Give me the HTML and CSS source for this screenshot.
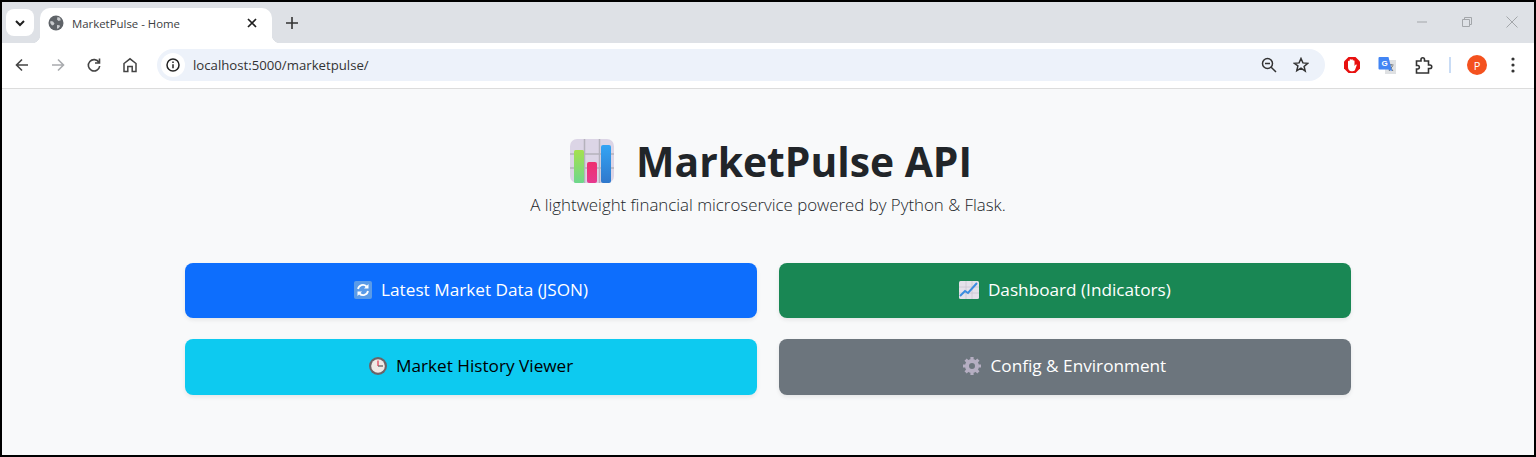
FILE: index.html
```html
<!DOCTYPE html>
<html lang="en">
<head>
    <meta charset="UTF-8">
    <meta name="viewport" content="width=device-width, initial-scale=1.0">
    <title>MarketPulse - Home</title>
    <link rel="stylesheet" href="styles.css">
</head>
<body>
<div class="window">

    <!-- Tab strip -->
    <div class="tabstrip">
        <div class="tab-search">
            <svg width="12" height="12" viewBox="0 0 12 12"><path d="M2 4l4 4 4-4" fill="none" stroke="#1f1f1f" stroke-width="2"/></svg>
        </div>
        <div class="tab">
            <svg class="tab-globe" width="16" height="16" viewBox="0 0 16 16">
                <circle cx="8" cy="8" r="7.5" fill="#5f6368"/>
                <path d="M9.500 2l2.500.8.800 2.400-2.300.8-1.500-1.500zM2.500 6l2.500.5 1.500 2-1 1.500-1.500.5-1.800-2.500zM9 10l2.500.3.500 1-1.500 2-1.500.5z" fill="#c9cbce"/>
            </svg>
            <span class="tab-title">MarketPulse - Home</span>
            <svg class="tab-close" width="10" height="10" viewBox="0 0 10 10"><path d="M1 1l8 8M9 1l-8 8" stroke="#1f1f1f" stroke-width="1.700"/></svg>
        </div>
        <svg class="new-tab" width="12" height="12" viewBox="0 0 12 12"><path d="M6 0v12M0 6h12" stroke="#333" stroke-width="1.600"/></svg>
        <div class="window-controls">
            <svg width="12" height="12" viewBox="0 0 12 12"><path d="M1 6h10" stroke="#a3a6aa" stroke-width="1"/></svg>
            <svg width="12" height="12" viewBox="0 0 12 12"><path d="M1.500 3.500h7v7h-7zM3.500 3.500v-2h7v7h-2" fill="none" stroke="#a3a6aa" stroke-width="1"/></svg>
            <svg width="12" height="12" viewBox="0 0 12 12"><path d="M.5.500l11 11M11.500.500l-11 11" stroke="#a3a6aa" stroke-width="1"/></svg>
        </div>
    </div>

    <!-- Toolbar -->
    <div class="toolbar">
        <div class="nav-icons">
            <svg width="16" height="16" viewBox="0 0 16 16"><path d="M14 8H2.500M8 2.500L2.500 8 8 13.500" fill="none" stroke="#444" stroke-width="1.600"/></svg>
            <svg width="16" height="16" viewBox="0 0 16 16"><path d="M2 8h11.500M8 2.500L13.500 8 8 13.500" fill="none" stroke="#a9abae" stroke-width="1.600"/></svg>
            <svg width="16" height="16" viewBox="0 0 16 16"><path d="M13 5.500A5.700 5.700 0 1 0 13.700 9M13.500 1.500v4.500H9" fill="none" stroke="#444" stroke-width="1.600"/></svg>
            <svg width="16" height="16" viewBox="0 0 16 16"><path d="M2 14.500V6.500L8 1.800l6 4.700v8h-3.800V9.500H5.800v5z" fill="none" stroke="#444" stroke-width="1.500"/></svg>
        </div>
        <div class="omnibox">
            <div class="site-info">
                <svg width="14" height="14" viewBox="0 0 14 14"><circle cx="7" cy="7" r="6" fill="none" stroke="#222" stroke-width="1.500"/><path d="M7 6.200v4M7 3.500v1.500" stroke="#222" stroke-width="1.500"/></svg>
            </div>
            <span class="url">localhost:5000/marketpulse/</span>
            <svg class="omni-zoom" width="16" height="16" viewBox="0 0 16 16"><circle cx="6.500" cy="6.500" r="5" fill="none" stroke="#333" stroke-width="1.500"/><path d="M4 6.500h5M10.200 10.200L15 15" stroke="#333" stroke-width="1.500"/></svg>
            <svg class="omni-star" width="16" height="16" viewBox="0 0 16 16"><path d="M8 1.500l1.900 4.400 4.800.4-3.600 3.100 1.100 4.700L8 11.100l-4.200 2.500 1.100-4.700L1.300 6.300l4.800-.4z" fill="none" stroke="#333" stroke-width="1.500"/></svg>
        </div>
        <div class="extensions">
            <svg class="ext-block" width="18" height="18" viewBox="0 0 18 18">
                <path d="M5.500 1h7L17 5.500v7L12.500 17h-7L1 12.500v-7z" fill="#e8100f"/>
                <path d="M5 10V5.500c0-1 1.600-1 1.600 0V4c0-1 1.600-1 1.600 0 0-1 1.700-1 1.700 0V5c0-1 1.600-1 1.600 0v5l1-1.200c.7-.7 1.600 0 1.100.8L12 14c-.6.8-1.200 1.200-2.200 1.200H8C6 15.200 5 13 5 11z" fill="#fff"/>
            </svg>
            <svg class="ext-translate" width="18" height="18" viewBox="0 0 18 18">
                <rect x="7" y="4" width="11" height="14" fill="#dfe1e3"/>
                <path d="M10.500 9h5M13 8v1M11 15l3.500-5M12 11l3 4" fill="none" stroke="#6b7076" stroke-width="1"/>
                <path d="M1.500 1h9L14 15l-4-1.500H1.500a1 1 0 0 1-1-1V2a1 1 0 0 1 1-1z" fill="#4285f4"/>
                <text x="3.500" y="10" class="ext-g">G</text>
            </svg>
            <svg class="ext-puzzle" width="18" height="18" viewBox="0 0 18 18"><path d="M1.500 5H6V3.500a1.700 1.700 0 0 1 3.500 0V5h4v4h1.500a1.700 1.700 0 0 1 0 3.500h-1.500v4.500H1.500v-4H3a1.800 1.800 0 0 0 0-3.500H1.500z" fill="none" stroke="#333" stroke-width="1.600"/></svg>
            <span class="ext-divider"></span>
            <span class="avatar">P</span>
            <svg class="menu-dots" width="4" height="16" viewBox="0 0 4 16"><circle cx="2" cy="2" r="1.600" fill="#333"/><circle cx="2" cy="8" r="1.600" fill="#333"/><circle cx="2" cy="14" r="1.600" fill="#333"/></svg>
        </div>
    </div>

    <!-- Page -->
    <div class="page">
        <h1 class="title">
            <svg class="title-icon" width="44" height="44" viewBox="0 0 44 44">
                <defs>
                    <linearGradient id="barGreen" x1="0" y1="0" x2="0" y2="1"><stop offset="0" stop-color="#a5e04e"/><stop offset="1" stop-color="#6ed78c"/></linearGradient>
                    <linearGradient id="barPink" x1="0" y1="0" x2="0" y2="1"><stop offset="0" stop-color="#ee2f6f"/><stop offset="1" stop-color="#e6398f"/></linearGradient>
                    <linearGradient id="barBlue" x1="0" y1="0" x2="0" y2="1"><stop offset="0" stop-color="#33a4f4"/><stop offset="1" stop-color="#2f78cc"/></linearGradient>
                </defs>
                <rect width="44" height="44" rx="7" fill="#dcd5e6"/>
                <path d="M14.500 0v44M29.500 0v44M0 15h44M0 29h44" stroke="#b5b2bc" stroke-width="1.500"/>
                <rect x="4" y="11" width="10" height="33" rx="1.500" fill="url(#barGreen)"/>
                <rect x="17" y="23" width="10" height="21" rx="2" fill="url(#barPink)"/>
                <rect x="31" y="6" width="10" height="38" rx="2" fill="url(#barBlue)"/>
            </svg>
            MarketPulse API
        </h1>
        <p class="subtitle">A lightweight financial microservice powered by Python &amp; Flask.</p>

        <div class="button-grid">
            <a class="btn btn-blue" href="#">
                <svg width="18" height="18" viewBox="0 0 18 18">
                    <rect width="18" height="18" rx="2" fill="#5a9be8"/>
                    <path d="M4 8a5 5 0 0 1 8.500-2.500M14 10a5 5 0 0 1-8.500 2.500" fill="none" stroke="#fff" stroke-width="1.800"/>
                    <path d="M14.500 3v4.500H10zM3.500 15v-4.500H8z" fill="#fff"/>
                </svg>
                Latest Market Data (JSON)
            </a>
            <a class="btn btn-green" href="#">
                <svg width="20" height="18" viewBox="0 0 20 18">
                    <rect width="20" height="18" rx="1.500" fill="#e4e1ea"/>
                    <path d="M0 6h20M0 12h20M7 0v18M13 0v18" stroke="#c9c6d2" stroke-width=".8"/>
                    <path d="M1 15l5-5 3 2 9-10" fill="none" stroke="#3b8de0" stroke-width="2"/>
                </svg>
                Dashboard (Indicators)
            </a>
            <a class="btn btn-cyan" href="#">
                <svg width="18" height="18" viewBox="0 0 18 18">
                    <circle cx="9" cy="9" r="9" fill="#6b6468"/>
                    <circle cx="9" cy="9" r="6.800" fill="#efe9e6"/>
                    <path d="M9 9H14" stroke="#555" stroke-width="1.200"/>
                    <path d="M9 9V3.500" stroke="#e2364f" stroke-width="1.200"/>
                </svg>
                Market History Viewer
            </a>
            <a class="btn btn-gray" href="#">
                <svg width="18" height="18" viewBox="0 0 18 18">
                    <circle cx="9" cy="9" r="5" fill="none" stroke="#b5aec2" stroke-width="4"/>
                    <path d="M9 0v4M9 14v4M0 9h4M14 9h4M2.600 2.600l2.800 2.800M12.600 12.600l2.800 2.800M15.400 2.600l-2.800 2.800M5.400 12.600l-2.800 2.800" stroke="#b5aec2" stroke-width="3.200"/>
                </svg>
                Config &amp; Environment
            </a>
        </div>
    </div>
</div>
</body>
</html>
```

FILE: styles.css
```css
/* body */
html, body {
    margin: 0;
    padding: 0;
    height: 100%;
}

body {
    font-family: 'Open Sans', 'Noto Sans', sans-serif;
    background-color: #f8f9fa;
    overflow: hidden;
}

.window {
    box-sizing: border-box;
    height: 457px;
    border: 2px solid #000;
    display: flex;
    flex-direction: column;
}

/* Tab strip */
.tabstrip {
    height: 41px;
    background-color: #dee1e6;
    display: flex;
    align-items: flex-end;
    flex-shrink: 0;
}

.tab-search {
    width: 28px;
    height: 27px;
    margin: 0 6px 7px 4px;
    background-color: #fff;
    border-radius: 8px;
    display: flex;
    align-items: center;
    justify-content: center;
}

.tab {
    position: relative;
    box-sizing: border-box;
    width: 232px;
    height: 35px;
    padding: 0 16px 5px 8px;
    background-color: #fff;
    border-radius: 10px 10px 0 0;
    display: flex;
    align-items: center;
}

.tab::before,
.tab::after {
    content: "";
    position: absolute;
    bottom: 0;
    width: 8px;
    height: 8px;
}

.tab::before {
    left: -8px;
    background: radial-gradient(circle at 0 0, transparent 8px, #fff 8.500px);
}

.tab::after {
    right: -8px;
    background: radial-gradient(circle at 100% 0, transparent 8px, #fff 8.500px);
}

.tab-title {
    margin-left: 8px;
    font-size: 11.400px;
    color: #3c4043;
    flex: 1;
    white-space: nowrap;
}

.tab-close {
    margin-right: -1px;
}

.new-tab {
    margin: 0 0 14px 14px;
}

.window-controls {
    margin-left: auto;
    margin-right: 16px;
    margin-bottom: 15px;
    display: flex;
    gap: 33px;
}

/* Toolbar */
.toolbar {
    height: 46px;
    box-sizing: border-box;
    padding-bottom: 1px;
    background-color: #fff;
    border-bottom: 1px solid #dcdcdc;
    display: flex;
    align-items: center;
    flex-shrink: 0;
}

.nav-icons {
    display: flex;
    gap: 20px;
    margin-left: 12px;
}

.omnibox {
    box-sizing: border-box;
    width: 1168px;
    height: 32px;
    margin-left: 19px;
    padding: 0 16px 0 4px;
    background-color: #edf2fa;
    border-radius: 16px;
    display: flex;
    align-items: center;
}

.site-info {
    width: 24px;
    height: 24px;
    background-color: #fff;
    border-radius: 50%;
    display: flex;
    align-items: center;
    justify-content: center;
}

.url {
    margin-left: 8px;
    font-size: 13.200px;
    color: #333;
    flex: 1;
    white-space: nowrap;
}

.omni-star {
    margin-left: 16px;
}

.extensions {
    display: flex;
    align-items: center;
    margin-left: 18px;
}

.ext-translate {
    margin-left: 17px;
}

.ext-puzzle {
    margin-left: 19px;
}

.ext-g {
    font-family: 'Liberation Sans', sans-serif;
    font-size: 8px;
    font-weight: 700;
    fill: #fff;
}

.ext-divider {
    width: 2px;
    height: 16px;
    margin-left: 16px;
    background-color: #c9dcf5;
}

.avatar {
    width: 20px;
    height: 20px;
    margin-left: 16px;
    border-radius: 50%;
    background-color: #f4511e;
    color: #fff;
    font-size: 11px;
    display: flex;
    align-items: center;
    justify-content: center;
}

.menu-dots {
    margin-left: 24px;
}

/* Page */
.page {
    flex: 1;
    background-color: #f8f9fa;
    display: flex;
    flex-direction: column;
    align-items: center;
}

.title {
    margin: 46px 0 0;
    padding-left: 6px;
    font-size: 40.800px;
    line-height: 52px;
    font-weight: 700;
    color: #212529;
    display: flex;
    align-items: center;
    gap: 22px;
}

.subtitle {
    margin: 6px 0 0;
    font-size: 16.850px;
    line-height: 24px;
    font-weight: 300;
    color: #212529;
}

.button-grid {
    width: 1165.500px;
    margin-top: 46px;
    display: grid;
    grid-template-columns: 1fr 1fr;
    gap: 21px 22px;
}

.btn {
    box-sizing: border-box;
    height: 55.300px;
    padding-bottom: 2px;
    border-radius: 8px;
    font-size: 17.200px;
    text-decoration: none;
    display: flex;
    align-items: center;
    justify-content: center;
    gap: 9px;
    box-shadow: 0 2px 4px rgba(0, 0, 0, 0.08);
}

.btn-blue {
    background-color: #0d6efd;
    color: #fff;
}

.btn-green {
    background-color: #198754;
    color: #fff;
}

.btn-cyan {
    background-color: #0dcaf0;
    color: #000;
}

.btn-gray {
    background-color: #6c757d;
    color: #fff;
}
```
